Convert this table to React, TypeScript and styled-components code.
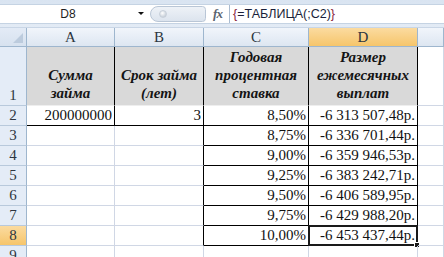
import React from 'react';
import styled, { createGlobalStyle, css } from 'styled-components';

const GlobalStyle = createGlobalStyle`
  html, body {
    margin: 0;
    padding: 0;
    background: #ffffff;
    overflow: hidden;
  }
  body {
    width: 444px;
    height: 257px;
  }
`;

const Window = styled.div`
  width: 444px;
  height: 257px;
  overflow: hidden;
  display: flex;
  flex-direction: column;
  background: #ffffff;
`;

const FormulaArea = styled.div`
  height: 28px;
  box-sizing: border-box;
  padding: 4px 0 4px 0;
  background: linear-gradient(#d9e4f1, #e3ebf5);
  border-bottom: 1px solid #c9d6e6;
`;

const FormulaBar = styled.div`
  height: 20px;
  display: flex;
  align-items: stretch;
  background: #ffffff;
  border-top: 1px solid #c5d3e3;
  border-bottom: 1px solid #c5d3e3;
  box-sizing: border-box;
`;

const NameBox = styled.div`
  width: 148px;
  display: flex;
  align-items: center;
  position: relative;
  font-family: 'Liberation Sans', Arial, sans-serif;
  font-size: 12px;
  color: #1e1e1e;
  justify-content: center;
  padding-right: 12px;
  box-sizing: border-box;
`;

const DropArrow = styled.span`
  position: absolute;
  right: 4px;
  top: 7px;
  width: 0;
  height: 0;
  border-left: 3px solid transparent;
  border-right: 3px solid transparent;
  border-top: 3px solid #111;
`;

const Pill = styled.div`
  width: 56px;
  margin: 1px 0 1px 2px;
  border-radius: 9px 4px 4px 9px;
  background: linear-gradient(#eef2f7, #dce4ee);
  border: 1px solid #b9c6d6;
  box-sizing: border-box;
  display: flex;
  align-items: center;
  padding-left: 8px;
`;

const PillDot = styled.span`
  width: 6px;
  height: 6px;
  border-radius: 50%;
  background: radial-gradient(circle at 40% 35%, #ffffff, #b5c0cd);
  border: 1px solid #c8d0da;
`;

const Fx = styled.div`
  width: 23px;
  display: flex;
  align-items: center;
  justify-content: center;
  font-family: 'Liberation Serif', 'Times New Roman', serif;
  font-style: italic;
  font-weight: bold;
  font-size: 13px;
  color: #5a6470;
  letter-spacing: -1px;
`;

const FormulaInput = styled.div`
  flex: 1;
  border-left: 1px solid #a9bbd0;
  display: flex;
  align-items: center;
  padding-left: 3px;
  font-family: 'Liberation Sans', Arial, sans-serif;
  font-size: 12.5px;
  color: #1a1f3a;
`;

const Brace = styled.span`
  color: #8a1c3a;
`;

const Sheet = styled.div`
  display: grid;
  grid-template-columns: 27px 88px 89px 105px 109px 1fr;
  grid-template-rows: 19px 59px repeat(8, 20px);
`;

const Corner = styled.div`
  background: linear-gradient(#e3ebf6, #d7e2ef);
  border-right: 1px solid #9eb6ce;
  border-bottom: 1px solid #9eb6ce;
  box-sizing: border-box;
  position: relative;
  &::after {
    content: '';
    position: absolute;
    right: 3px;
    bottom: 3px;
    width: 0;
    height: 0;
    border-left: 10px solid transparent;
    border-bottom: 10px solid #bccbdd;
  }
`;

const ColHead = styled.div<{ $active?: boolean }>`
  box-sizing: border-box;
  border-right: 1px solid #9eb6ce;
  border-bottom: 1px solid #9eb6ce;
  background: ${(p) =>
    p.$active
      ? 'linear-gradient(#fbdba0, #f6c56b)'
      : 'linear-gradient(#f1f5fb, #dde6f1)'};
  display: flex;
  align-items: center;
  justify-content: center;
  font-family: 'Liberation Serif', 'Times New Roman', serif;
  font-size: 15px;
  color: #2d3540;
`;

const RowHead = styled.div<{ $active?: boolean }>`
  box-sizing: border-box;
  border-right: 1px solid #9eb6ce;
  border-bottom: 1px solid #b8c9dc;
  background: ${(p) =>
    p.$active ? 'linear-gradient(#fbdba0, #f6c56b)' : '#e4ecf7'};
  display: flex;
  align-items: flex-end;
  justify-content: center;
  padding-bottom: 1px;
  font-family: 'Liberation Serif', 'Times New Roman', serif;
  font-size: 15px;
  color: #2d3540;
`;

const Cell = styled.div<{ $right?: boolean; $bottom?: boolean; $head?: boolean; $left?: boolean }>`
  box-sizing: border-box;
  position: relative;
  border-right: 1px solid ${(p) => (p.$right ? '#000' : '#d0d7e5')};
  border-bottom: 1px solid ${(p) => (p.$bottom ? '#000' : '#d0d7e5')};
  display: flex;
  align-items: flex-end;
  justify-content: flex-end;
  padding: 0 2px 1px 2px;
  font-family: 'Liberation Serif', 'Times New Roman', serif;
  font-size: 15px;
  line-height: 18px;
  color: #111;
  white-space: nowrap;
  ${(p) =>
    p.$head &&
    css`
      background: #d9d9d9;
      border-bottom-color: #eeeeee;
      justify-content: center;
      text-align: center;
      font-weight: bold;
      font-style: italic;
      white-space: normal;
      padding-bottom: 3px;
      color: #141414;
    `}
`;

const Selection = styled.div`
  position: absolute;
  left: -1px;
  top: -1px;
  right: -1px;
  bottom: -1px;
  border: 2px solid #1a1a1a;
  pointer-events: none;
  &::after {
    content: '';
    position: absolute;
    right: -4px;
    bottom: -4px;
    width: 4px;
    height: 4px;
    background: #1a1a1a;
    border: 1px solid #fff;
  }
`;

const columns = ['A', 'B', 'C', 'D'];

const headers = ['Сумма займа', 'Срок займа (лет)', 'Годовая процентная ставка', 'Размер ежемесячных выплат'];

const rates = ['8,50%', '8,75%', '9,00%', '9,25%', '9,50%', '9,75%', '10,00%'];
const payments = [
  '-6 313 507,48р.',
  '-6 336 701,44р.',
  '-6 359 946,53р.',
  '-6 383 242,71р.',
  '-6 406 589,95р.',
  '-6 429 988,20р.',
  '-6 453 437,44р.',
];

export default function App() {
  const dataRows = [];
  for (let i = 0; i < 8; i++) {
    const row = i + 2;
    const inTable = row <= 8;
    dataRows.push(
      <React.Fragment key={row}>
        <RowHead $active={row === 8}>{row}</RowHead>
        <Cell $right={row === 2} $bottom={row === 2}>
          {row === 2 ? '200000000' : ''}
        </Cell>
        <Cell $right={inTable} $bottom={row === 2}>
          {row === 2 ? '3' : ''}
        </Cell>
        <Cell $right={inTable} $bottom={inTable}>
          {inTable ? rates[i] : ''}
        </Cell>
        <Cell $right={inTable} $bottom={inTable}>
          {inTable ? payments[i] : ''}
          {row === 8 && <Selection />}
        </Cell>
        <Cell />
      </React.Fragment>
    );
  }

  return (
    <Window>
      <GlobalStyle />
      <FormulaArea>
        <FormulaBar>
          <NameBox>
            D8
            <DropArrow />
          </NameBox>
          <Pill>
            <PillDot />
          </Pill>
          <Fx>fx</Fx>
          <FormulaInput>
            <Brace>{'{'}</Brace>=ТАБЛИЦА(;C2)<Brace>{'}'}</Brace>
          </FormulaInput>
        </FormulaBar>
      </FormulaArea>
      <Sheet>
        <Corner />
        {columns.map((c) => (
          <ColHead key={c} $active={c === 'D'}>
            {c}
          </ColHead>
        ))}
        <ColHead />
        <RowHead>1</RowHead>
        {headers.map((h) => (
          <Cell key={h} $head $right>
            {h}
          </Cell>
        ))}
        <Cell />
        {dataRows}
      </Sheet>
    </Window>
  );
}
